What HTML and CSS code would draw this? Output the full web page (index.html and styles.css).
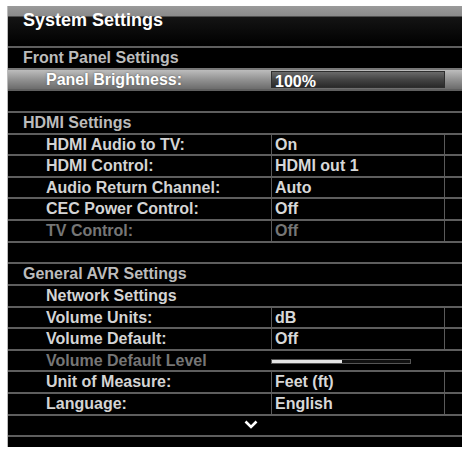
FILE: index.html
```html
<!DOCTYPE html>
<html lang="en">
<head>
    <meta charset="UTF-8">
    <meta name="viewport" content="width=device-width, initial-scale=1.0">
    <title>System Settings</title>
    <link rel="stylesheet" href="styles.css">
</head>
<body>
    <div class="screen">
        <div class="title">System Settings</div>

        <div class="row head">Front Panel Settings</div>
        <div class="row item active">
            <span class="label">Panel Brightness:</span>
            <span class="value">100%</span>
        </div>
        <div class="row"></div>

        <div class="row head">HDMI Settings</div>
        <div class="row item">
            <span class="label">HDMI Audio to TV:</span>
            <span class="value">On</span>
        </div>
        <div class="row item">
            <span class="label">HDMI Control:</span>
            <span class="value">HDMI out 1</span>
        </div>
        <div class="row item">
            <span class="label">Audio Return Channel:</span>
            <span class="value">Auto</span>
        </div>
        <div class="row item">
            <span class="label">CEC Power Control:</span>
            <span class="value">Off</span>
        </div>
        <div class="row item disabled">
            <span class="label">TV Control:</span>
            <span class="value">Off</span>
        </div>
        <div class="row"></div>

        <div class="row head">General AVR Settings</div>
        <div class="row item">
            <span class="label">Network Settings</span>
        </div>
        <div class="row item">
            <span class="label">Volume Units:</span>
            <span class="value">dB</span>
        </div>
        <div class="row item">
            <span class="label">Volume Default:</span>
            <span class="value">Off</span>
        </div>
        <div class="row item disabled">
            <span class="label">Volume Default Level</span>
            <span class="slider"><span class="fill" style="width: 51%"></span></span>
        </div>
        <div class="row item">
            <span class="label">Unit of Measure:</span>
            <span class="value">Feet (ft)</span>
        </div>
        <div class="row item">
            <span class="label">Language:</span>
            <span class="value">English</span>
        </div>
        <div class="row more">
            <svg width="14" height="9" viewBox="0 0 14 9">
                <polyline points="1.5,1.5 7,7 12.5,1.5" fill="none" stroke="#fff" stroke-width="2.6"/>
            </svg>
        </div>
        <div class="row"></div>
    </div>
</body>
</html>
```

FILE: styles.css
```css
body {
    margin: 0;
    background: #fff;
    font-family: "Liberation Sans", Arial, sans-serif;
    font-weight: bold;
}
.screen {
    margin: 6px 0 0 7px;
    width: 455px;
    height: 441px;
    background: #000;
    overflow: hidden;
    border-left: 1px solid #bbb;
    box-sizing: border-box;
}
.title {
    height: 40px;
    box-sizing: border-box;
    padding: 4px 0 0 15px;
    font-size: 18px;
    line-height: 20px;
    color: #fff;
    background: linear-gradient(#9a9a9a 0, #8a8a8a 10px, #141414 11px, #000 40px);
}
.row {
    height: 21.63px;
    box-sizing: border-box;
    border-top: 2px solid #5e5e5e;
    display: flex;
    align-items: stretch;
    font-size: 16px;
    line-height: 19px;
}
.head {
    padding-left: 15px;
    color: #bcbcbc;
}
.item .label {
    width: 225px;
    padding-left: 38px;
    color: #d4d4d4;
}
.value {
    width: 174px;
    box-sizing: border-box;
    border-left: 1px solid #5a5a5a;
    border-right: 1px solid #5a5a5a;
    padding-left: 3px;
    color: #d8d8d8;
}
.disabled .label,
.disabled .value {
    color: #767676;
}
.active {
    border-top-color: #777;
    background: linear-gradient(#bdbdbd, #969696 45%, #6c6c6c);
}
.active .label {
    color: #fff;
    text-shadow: 0 0 2px #555;
}
.active .value {
    margin: 1px 0 1px;
    color: #fff;
    border: 1px solid #2e2e2e;
    background: linear-gradient(#6a6a6a, #444 50%, #2a2a2a);
}
.slider {
    align-self: center;
    width: 140px;
    height: 5px;
    box-sizing: border-box;
    border: 1px solid #555;
    background: #111;
    margin-top: 1px;
}
.fill {
    display: block;
    height: 100%;
    background: #e4e4e4;
}
.more {
    padding-left: 236px;
    align-items: center;
}
.more svg {
    display: block;
    margin-top: -2px;
}
```
